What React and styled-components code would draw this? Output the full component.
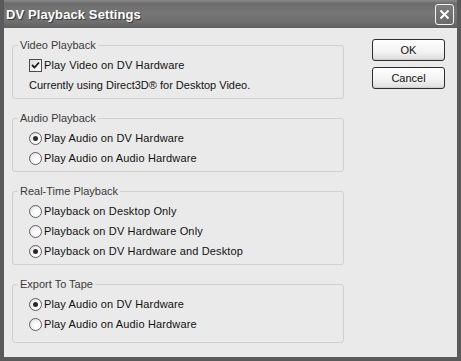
import React from "react";
import styled, { createGlobalStyle } from "styled-components";

/* ===== Global ===== */
const GlobalStyle = createGlobalStyle`
  html, body {
    margin: 0;
    padding: 0;
    background: #eaeaea;
  }
  * {
    box-sizing: border-box;
  }
`;

/* ===== Window frame ===== */
const Window = styled.div`
  width: 461px;
  height: 361px;
  display: flex;
  flex-direction: column;
  background: #eaeaea;
  border-left: 4px solid #5a5a5a;
  border-right: 4px solid #5a5a5a;
  border-bottom: 4px solid #5a5a5a;
  font-family: "Liberation Sans", Arial, sans-serif;
  font-size: 11px;
  color: #111;
  overflow: hidden;
`;

const TitleBar = styled.div`
  height: 28px;
  margin: 0 -4px;
  padding: 0 7px 0 6px;
  display: flex;
  align-items: center;
  justify-content: space-between;
  background: linear-gradient(
    180deg,
    #8a8a8a 0%,
    #6c6c6c 12%,
    #767676 45%,
    #6e6e6e 80%,
    #5e5e5e 100%
  );
`;

const Title = styled.span`
  font-family: "Liberation Sans", Arial, sans-serif;
  font-weight: bold;
  font-size: 13px;
  color: #fff;
  text-shadow: 1px 1px 0 #3a3a3a;
  letter-spacing: 0.1px;
`;

const CloseButton = styled.button`
  width: 19px;
  height: 21px;
  padding: 0;
  display: flex;
  align-items: center;
  justify-content: center;
  border: 1px solid #f4f4f4;
  border-radius: 3px;
  background: linear-gradient(180deg, #7c7c7c, #6a6a6a);
  margin-top: 1px;
`;

/* ===== Body ===== */
const Body = styled.div`
  flex: 1;
  display: flex;
  align-items: flex-start;
  padding: 11px 0 0 8px;
  gap: 28px;
`;

const Groups = styled.div`
  width: 332px;
  display: flex;
  flex-direction: column;
  gap: 13px;
`;

const Group = styled.fieldset`
  margin: 0;
  padding: 0;
  border: 1px solid #d0d0d0;
  border-radius: 3px;
  min-width: 0;
`;

const Legend = styled.legend`
  margin-left: 5px;
  padding: 0 2px;
  line-height: 13px;
  color: #3a3a3a;
`;

const GroupContent = styled.div`
  padding: ${(p) => `3px 0 ${p.$bottom}px 16px`};
`;

const Row = styled.label`
  height: 20px;
  display: flex;
  align-items: center;
  gap: 2px;
  white-space: nowrap;
  letter-spacing: 0.15px;
`;

const Note = styled.div`
  height: 20px;
  display: flex;
  align-items: center;
  white-space: nowrap;
`;

const Box = styled.span`
  width: 13px;
  height: 13px;
  flex: none;
  border: 1px solid #4a4a4a;
  background: linear-gradient(135deg, #dcdcdc, #ffffff);
  display: flex;
  align-items: center;
  justify-content: center;
`;

const Radio = styled.span`
  width: 13px;
  height: 13px;
  flex: none;
  border: 1px solid #5e5e5e;
  border-radius: 50%;
  background: radial-gradient(circle at 65% 65%, #ffffff 30%, #d6d6d6 100%);
  display: flex;
  align-items: center;
  justify-content: center;

  &::after {
    content: "";
    width: 5px;
    height: 5px;
    border-radius: 50%;
    background: ${(p) => (p.$on ? "#2a2a2a" : "transparent")};
  }
`;

/* ===== Buttons ===== */
const Buttons = styled.div`
  display: flex;
  flex-direction: column;
  gap: 6px;
`;

const Button = styled.button`
  width: 73px;
  height: 22px;
  padding: 0;
  font-family: "Liberation Sans", Arial, sans-serif;
  font-size: 11px;
  color: #111;
  border: 1px solid #2e2e2e;
  border-radius: 3px;
  background: linear-gradient(180deg, #ffffff 0%, #f2f2f2 60%, #dcdcdc 100%);
  box-shadow: inset 0 -1px 0 #cfcfcf;
`;

/* ===== Parts ===== */
function CheckItem({ label }) {
  return (
    <Row>
      <Box>
        <svg width="9" height="9" viewBox="0 0 9 9">
          <path d="M1 4 L3.5 6.5 L8 1.5" stroke="#1a1a1a" strokeWidth="1.8" fill="none" />
        </svg>
      </Box>
      {label}
    </Row>
  );
}

function RadioItem({ label, on }) {
  return (
    <Row>
      <Radio $on={on} />
      {label}
    </Row>
  );
}

export default function App() {
  return (
    <>
      <GlobalStyle />
      <Window>
        <TitleBar>
          <Title>DV Playback Settings</Title>
          <CloseButton>
            <svg width="11" height="11" viewBox="0 0 11 11">
              <path d="M1.5 1.5 L9.5 9.5 M9.5 1.5 L1.5 9.5" stroke="#fff" strokeWidth="2" />
            </svg>
          </CloseButton>
        </TitleBar>
        <Body>
          <Groups>
            <Group>
              <Legend>Video Playback</Legend>
              <GroupContent $bottom={3}>
                <CheckItem label="Play Video on DV Hardware" />
                <Note>Currently using Direct3D® for Desktop Video.</Note>
              </GroupContent>
            </Group>
            <Group>
              <Legend>Audio Playback</Legend>
              <GroupContent $bottom={3}>
                <RadioItem on label="Play Audio on DV Hardware" />
                <RadioItem label="Play Audio on Audio Hardware" />
              </GroupContent>
            </Group>
            <Group>
              <Legend>Real-Time Playback</Legend>
              <GroupContent $bottom={3}>
                <RadioItem label="Playback on Desktop Only" />
                <RadioItem label="Playback on DV Hardware Only" />
                <RadioItem on label="Playback on DV Hardware and Desktop" />
              </GroupContent>
            </Group>
            <Group>
              <Legend>Export To Tape</Legend>
              <GroupContent $bottom={8}>
                <RadioItem on label="Play Audio on DV Hardware" />
                <RadioItem label="Play Audio on Audio Hardware" />
              </GroupContent>
            </Group>
          </Groups>
          <Buttons>
            <Button>OK</Button>
            <Button>Cancel</Button>
          </Buttons>
        </Body>
      </Window>
    </>
  );
}
